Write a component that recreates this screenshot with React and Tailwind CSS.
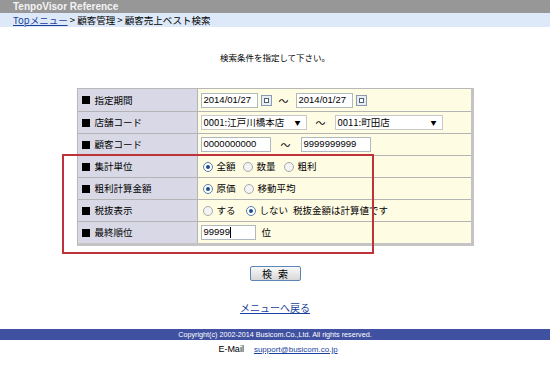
import React from "react";

const font = { fontFamily: '"MS UI Gothic", "Noto Sans CJK JP", sans-serif' };
const latin = { fontFamily: '"Liberation Sans", "Noto Sans CJK JP", sans-serif' };

const Cal = () => (
  <span className="inline-flex w-[11px] h-[11px] border border-[#8a9ab0] bg-[#e8eef6] items-center justify-center ml-[3px]">
    <span className="block w-[5px] h-[5px] border border-[#506070] bg-white" />
  </span>
);

const Radio = ({ on }) => (
  <span className={`inline-flex w-[10px] h-[10px] rounded-full border items-center justify-center mr-[4px] ${on ? "border-[#5a7ca8] bg-white" : "border-[#a8a8a8] bg-[#f4f4f4]"}`}>
    {on && <span className="block w-[4px] h-[4px] rounded-full bg-[#1c4f8c]" />}
  </span>
);

const Box = ({ w, children }) => (
  <span className={`inline-flex items-center h-[15px] border border-[#b0b8c0] bg-white px-[2px] text-[9.5px] text-black whitespace-nowrap ${w}`} style={latin}>{children}</span>
);

const Select = ({ w, children }) => (
  <span className={`inline-flex items-center justify-between h-[15px] border border-[#c8c8c8] bg-white px-[2px] text-[9.5px] whitespace-nowrap ${w}`}>
    <span>{children}</span>
    <span className="text-[6px] mr-[3px]">▼</span>
  </span>
);

const Tilde = ({ cls = "mx-[7px]" }) => <span className={`text-[10px] ${cls}`}>～</span>;

const rows = [
  {
    label: "指定期間",
    value: (
      <>
        <Box w="w-[57px]">2014/01/27</Box>
        <Cal />
        <Tilde />
        <Box w="w-[57px]">2014/01/27</Box>
        <Cal />
      </>
    ),
  },
  {
    label: "店舗コード",
    value: (
      <>
        <Select w="w-[106px]">0001:江戸川橋本店</Select>
        <Tilde cls="mx-[9px]" />
        <Select w="w-[108px]">0011:町田店</Select>
      </>
    ),
  },
  {
    label: "顧客コード",
    value: (
      <>
        <Box w="w-[70px]">0000000000</Box>
        <Tilde cls="mx-[10px]" />
        <Box w="w-[70px]">9999999999</Box>
      </>
    ),
  },
  {
    label: "集計単位",
    value: (
      <>
        <span className="inline-flex items-center mr-[7px] ml-[2px]"><Radio on />全額</span>
        <span className="inline-flex items-center mr-[8px]"><Radio />数量</span>
        <span className="inline-flex items-center"><Radio />粗利</span>
      </>
    ),
  },
  {
    label: "粗利計算金額",
    value: (
      <>
        <span className="inline-flex items-center mr-[8px] ml-[2px]"><Radio on />原価</span>
        <span className="inline-flex items-center"><Radio />移動平均</span>
      </>
    ),
  },
  {
    label: "税抜表示",
    value: (
      <>
        <span className="inline-flex items-center mr-[10px] ml-[2px]"><Radio />する</span>
        <span className="inline-flex items-center mr-[5px]"><Radio on />しない</span>
        <span>税抜金額は計算値です</span>
      </>
    ),
  },
  {
    label: "最終順位",
    value: (
      <>
        <Box w="w-[55px]">99999<span className="inline-block w-px h-[11px] bg-black" /></Box>
        <span className="ml-[6px]">位</span>
      </>
    ),
  },
];

export default function App() {
  return (
    <div className="w-[550px] h-[365px] bg-white text-[10px] text-black relative" style={font}>
      <div className="h-[13px] bg-[#979797] pl-[13px] text-[10px] font-bold leading-[13px] text-[#f4f4f4]" style={latin}>
        TenpoVisor Reference
      </div>
      <div className="h-[14px] bg-[#dde9f8] pl-[13px] leading-[14px] text-[9.5px] whitespace-nowrap">
        <span className="text-[#1a3f9c] underline">Topメニュー</span>
        <span> &gt; 顧客管理 &gt; 顧客売上ベスト検索</span>
      </div>

      <div className="text-center mt-[23px] text-[8.5px] leading-[14px]">検索条件を指定して下さい。</div>

      <div className="relative mt-[24px] flex justify-center">
        <div className="w-[397px] border border-[#b8b8b8] border-r-[3px] border-r-[#c4c4c4] border-b-[3px] border-b-[#c4c4c4] bg-white">
          {rows.map((r, i) => (
            <div key={i} className={`flex h-[22px] text-[9.5px] whitespace-nowrap ${i > 0 ? "border-t border-[#b4b4b4]" : ""}`}>
              <div className="w-[120px] bg-[#d8d8e6] flex items-center pl-[4px] border-r border-[#b4b4b4]">
                <span className="inline-block w-[8px] h-[8px] bg-black mr-[5px]" />
                {r.label}
              </div>
              <div className="flex-1 bg-[#fffce4] flex items-center pl-[3px]">{r.value}</div>
            </div>
          ))}
        </div>
        <div className="absolute left-[62px] top-[66px] w-[312px] h-[100px] border-2 border-[#c0323a]" />
      </div>

      <div className="flex justify-center mt-[20px]">
        <span className="w-[51px] h-[15px] border border-[#5b86b5] rounded-[2px] bg-gradient-to-b from-[#f8f8f8] to-[#d8d8d8] text-[10px] leading-[13px] text-center tracking-[6px] pl-[6px]">検索</span>
      </div>

      <div className="text-center mt-[20px] text-[#1a3f9c] underline leading-[14px] text-[10px]">メニューへ戻る</div>

      <div className="mt-[14px] h-[11px] bg-[#3f51a0] text-center text-white text-[7.2px] leading-[11px]" style={latin}>
        Copyright(c) 2002-2014 Busicom.Co.,Ltd. All rights reserved.
      </div>
      <div className="text-center mt-[2px] leading-[14px] pl-[6px]" style={latin}>
        <span className="text-[9px] mr-[10px]">E-Mail</span>
        <span className="text-[8px] text-[#1a3f9c] underline">support@busicom.co.jp</span>
      </div>
    </div>
  );
}
